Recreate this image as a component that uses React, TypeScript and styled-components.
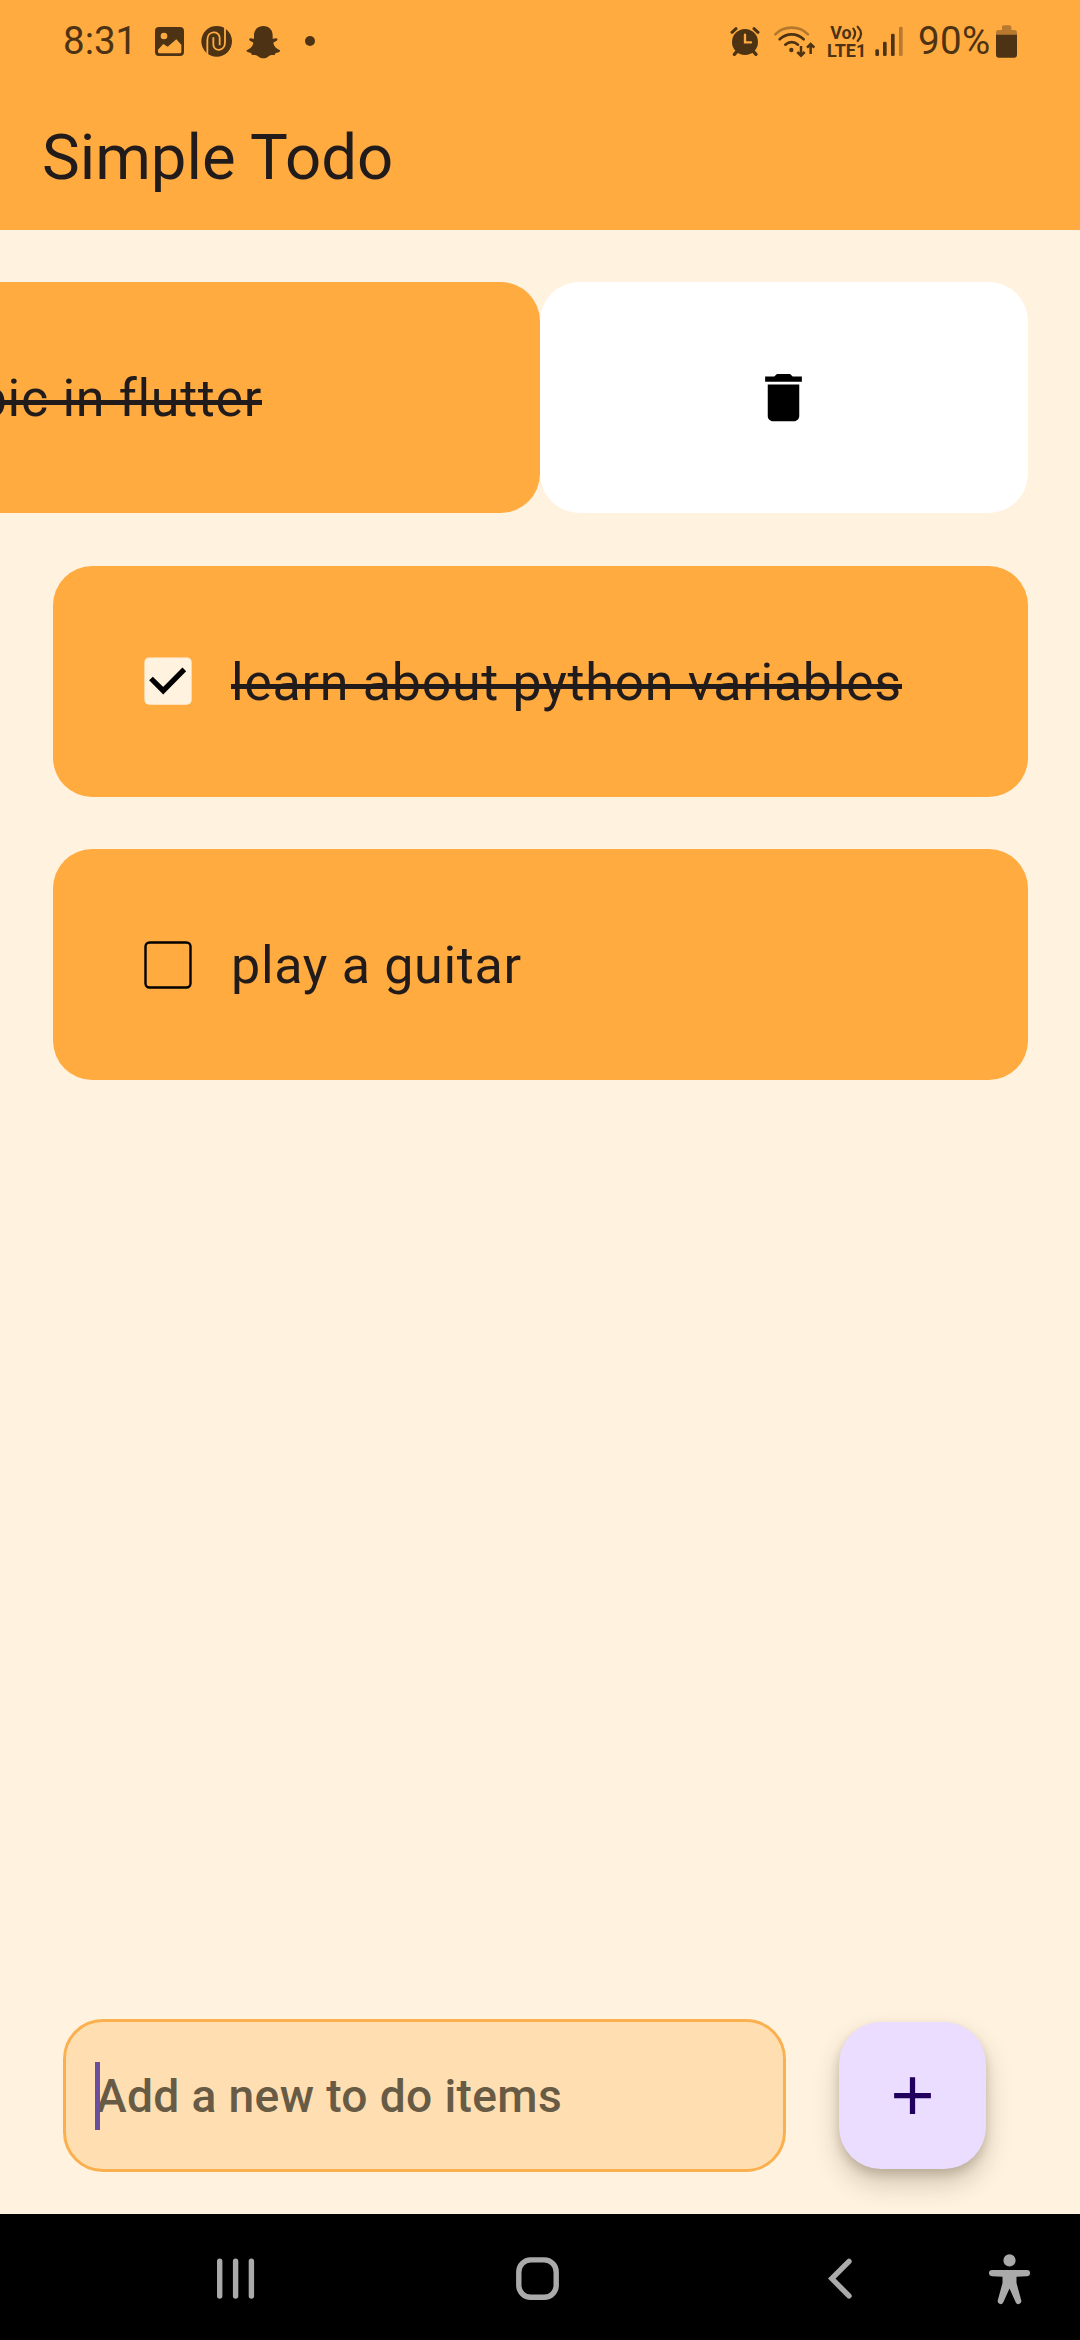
import React from "react";
import styled, { createGlobalStyle } from "styled-components";

const ink = "#4d3314";
const amber = "#ffab40";
const cream = "#fff2df";

const GlobalStyle = createGlobalStyle`
  * { box-sizing: border-box; }
  body { margin: 0; background: ${cream}; }
  button { border: 0; padding: 0; margin: 0; background: none; font: inherit; color: inherit; }
  svg { display: block; flex: none; }
`;

const Screen = styled.div`
  width: 1080px;
  height: 2340px;
  display: flex;
  flex-direction: column;
  overflow: hidden;
  background: ${cream};
  font-family: Roboto, "Noto Sans", sans-serif;
  color: #211c1b;
`;

const Header = styled.header`
  height: 230px;
  flex: none;
  background: ${amber};
`;

const StatusBar = styled.div`
  height: 83px;
  padding: 20px 62.7px 0 63px;
  display: flex;
  align-items: flex-start;
  justify-content: space-between;
  color: ${ink};
`;

const StatusGroup = styled.div`
  display: flex;
  align-items: center;
  height: 40px;
`;

const StatusText = styled.span<{ $width: number; $spacing: number }>`
  width: ${(p) => p.$width}px;
  padding-top: 2px;
  font-size: 38.5px;
  line-height: 40px;
  letter-spacing: ${(p) => p.$spacing}px;
  white-space: nowrap;
`;

const Gap = styled.span<{ $width: number }>`
  flex: none;
  width: ${(p) => p.$width}px;
`;

const Title = styled.h1`
  margin: 0;
  padding: 1px 0 0 42px;
  font-size: 63.5px;
  font-weight: 400;
  line-height: 147px;
`;

const List = styled.main`
  flex: 1;
  display: flex;
  flex-direction: column;
  gap: 52.5px;
  padding: 52.4px 52.5px 0;
  overflow: hidden;
`;

const SlideRow = styled.div<{ $offset: number }>`
  display: flex;
  flex: none;
  width: 1462.5px;
  margin-left: ${(p) => -p.$offset}px;
`;

const Card = styled.article`
  display: flex;
  align-items: center;
  flex: none;
  width: 975px;
  height: 231px;
  padding: 0 52.5px;
  border-radius: 39.4px;
  background: ${amber};
`;

const DeleteAction = styled.button`
  display: flex;
  align-items: center;
  justify-content: center;
  width: 487.5px;
  height: 231px;
  border-radius: 39.4px;
  background: #fff;
`;

const CheckArea = styled.span`
  display: flex;
  align-items: center;
  justify-content: center;
  width: 126px;
  height: 126px;
`;

/* The strike sits a little under the font's own line-through position. */
const Label = styled.span<{ $done: boolean; $shift: number }>`
  position: relative;
  margin: 2px 0 0 ${(p) => -p.$shift}px;
  font-size: 52px;
  line-height: 61px;
  letter-spacing: 0.68px;
  white-space: nowrap;

  &::after {
    content: "";
    display: ${(p) => (p.$done ? "block" : "none")};
    position: absolute;
    left: 0;
    right: 0;
    top: 32px;
    height: 5px;
    background: #211c1b;
  }
`;

const Composer = styled.footer`
  flex: none;
  display: flex;
  align-items: flex-start;
  gap: 53px;
  height: 195px;
  padding-left: 63px;
`;

const Field = styled.div`
  display: flex;
  align-items: center;
  width: 723px;
  height: 153px;
  padding-left: 28px;
  border: 3px solid #fbb04f;
  border-radius: 40px;
  background: #ffdfb1;
`;

const Caret = styled.span`
  flex: none;
  width: 5px;
  height: 68px;
  margin: 0 -5px 0 1px;
  background: #6a4f9e;
  z-index: 1;
`;

const Hint = styled.span`
  font-size: 46.2px;
  font-weight: 500;
  line-height: 56px;
  letter-spacing: 0.34px;
  margin-left: 1px;
  color: #685b45;
  white-space: nowrap;
`;

const AddButton = styled.button`
  display: flex;
  align-items: center;
  justify-content: center;
  width: 147px;
  height: 147px;
  margin-top: 3px;
  border-radius: 42px;
  background: #eaddff;
  box-shadow: 0 14px 26px rgba(60, 50, 30, 0.24), 0 5px 10px rgba(60, 50, 30, 0.18);
`;

const NavBar = styled.nav`
  flex: none;
  display: flex;
  align-items: flex-start;
  height: 126px;
  padding: 40px 0 0 217px;
  background: #000;
`;

/* Every status glyph shares one 40px tall strip, drawn on a 3x grid. */
const Glyph = ({ x, w, children }: { x: number; w: number; children: React.ReactNode }) => (
  <svg width={w / 3} height={40} viewBox={`${x} 60 ${w} 120`} fill={ink}>
    {children}
  </svg>
);

const ImageIcon = () => (
  <Glyph x={345} w={87}>
    <path
      fillRule="evenodd"
      d="M357 81h63a12 12 0 0 1 12 12v63a12 12 0 0 1-12 12h-63a12 12 0 0 1-12-12V93a12 12 0 0 1 12-12zM372 98a10 10 0 1 0 0 20a10 10 0 1 0 0-20zM354 149v6q0 5 5 5h60q5 0 5-5v-21l-15-16l-26 22l-13-8z"
    />
  </Glyph>
);

const SpiralIcon = () => (
  <Glyph x={483} w={93}>
    <circle cx={530} cy={124} r={46} />
    <g fill="none" stroke={amber} strokeWidth={5.5}>
      <path d="M502 168V120C502 90 539 92 539 113V136" />
      <path d="M555 80V126C555 157 520 155 520 134V112" />
    </g>
  </Glyph>
);

const GhostIcon = () => (
  <Glyph x={618} w={103}>
    <path d="M670 78c17 0 28 12 28 28v10c4 1 8-2 11-1c5 1 4 6 0 8c-4 2-9 3-9 7c2 10 10 17 20 21c2 3-3 6-13 8c-2 2-1 6-4 6c-6 0-11-1-16 3c-5 4-10 7-17 7s-12-3-17-7c-5-4-10-3-16-3c-3 0-2-4-4-6c-10-2-15-5-13-8c10-4 18-11 20-21c0-4-5-5-9-7c-4-2-5-7 0-8c3-1 7 2 11 1v-10c0-16 11-28 28-28z" />
  </Glyph>
);

const DotIcon = () => (
  <Glyph x={795} w={30}>
    <circle cx={810} cy={123} r={15} />
  </Glyph>
);

const AlarmIcon = () => (
  <Glyph x={58} w={90}>
    <circle cx={103} cy={126} r={39} />
    <g stroke={ink} strokeLinecap="round" fill="none">
      <path d="M64 97L76 86M142 97L130 86" strokeWidth={9} />
      <path d="M79 154L71 163M128 154L136 163" strokeWidth={10} />
    </g>
    <path d="M103 104V127H121" stroke={amber} strokeWidth={7} fill="none" strokeLinecap="round" />
  </Glyph>
);

const WifiIcon = () => (
  <Glyph x={190} w={124}>
    <g fill="none" stroke={ink} strokeLinecap="round">
      <path d="M194 103C220 76 266 76 292 103" strokeWidth={8} opacity={0.42} />
      <path d="M207 118C228 98 258 98 279 118" strokeWidth={8} />
      <path d="M224 134C235 124 251 124 262 134" strokeWidth={8} />
      <path
        d="M271 138V166M260 156L271 167L282 156M300 162V133M289 143L300 132L311 143"
        strokeWidth={7.5}
        strokeLinecap="butt"
      />
    </g>
    <circle cx={242} cy={150} r={6.5} />
  </Glyph>
);

const VolteIcon = () => (
  <Glyph x={350} w={118}>
    <g fontFamily="Roboto, sans-serif" fontWeight={700} fontSize={53}>
      <text x={360} y={118} textLength={64} lengthAdjust="spacingAndGlyphs">Vo</text>
      <text x={350} y={171} textLength={118} lengthAdjust="spacingAndGlyphs">LTE1</text>
    </g>
    <g fill="none" stroke={ink} strokeWidth={6.5} strokeLinecap="round">
      <path d="M429 86Q440 100 429 115" />
      <path d="M442 80Q462 100 442 123" />
    </g>
  </Glyph>
);

const SignalIcon = () => (
  <Glyph x={495} w={83}>
    <rect x={496} y={148} width={11} height={20} rx={4} />
    <rect x={519} y={125} width={11} height={43} rx={4} />
    <rect x={543} y={101} width={11} height={67} rx={4} />
    <rect x={567} y={80} width={11} height={88} rx={4} opacity={0.4} />
  </Glyph>
);

const BatteryIcon = () => (
  <Glyph x={858} w={63}>
    <path d="M858 105V97q0-7 7-7h11v-9q0-5 5-5h18q5 0 5 5v9h10q7 0 7 7v8z" opacity={0.4} />
    <path d="M858 104h63v60q0 9-9 9h-45q-9 0-9-9z" />
  </Glyph>
);

const Checkbox = ({ checked }: { checked: boolean }) => (
  <svg width={48} height={48} viewBox="0 0 48 48" fill="none">
    {checked ? (
      <>
        <rect x={0.4} y={0.4} width={47.25} height={47.25} rx={5} fill={cream} />
        <path d="M7 21.5L19.2 33.7L40.3 12.4" stroke="#000" strokeWidth={5.25} />
      </>
    ) : (
      <rect x={1.5} y={1.5} width={45} height={45} rx={4} stroke="#000" strokeWidth={2.4} />
    )}
  </svg>
);

const TrashIcon = () => (
  <svg width={63} height={63} viewBox="0 0 24 24">
    <path d="M6 19c0 1.1.9 2 2 2h8c1.1 0 2-.9 2-2V7H6v12zM19 4h-3.5l-1-1h-5l-1 1H5v2h14V4z" />
  </svg>
);

const PlusIcon = () => (
  <svg width={63} height={63} viewBox="0 0 24 24" fill="#21005d">
    <path d="M19 13h-6v6h-2v-6H5v-2h6V5h2v6h6v2z" />
  </svg>
);

const RecentsIcon = () => (
  <svg width={38} height={50} viewBox="0 0 38 50" stroke="#aaa" strokeWidth={5.4} strokeLinecap="round">
    <path d="M2.7 7.2V42M18.6 7.2V42M34.4 7.2V42" />
  </svg>
);

const HomeIcon = () => (
  <svg width={43} height={50} viewBox="0 0 43 50" fill="none" stroke="#aaa" strokeWidth={5.4}>
    <rect x={2.8} y={5.9} width={37.4} height={37.4} rx={12} />
  </svg>
);

const BackIcon = () => (
  <svg width={24} height={50} viewBox="0 0 24 50" fill="none" stroke="#aaa" strokeWidth={5.4} strokeLinecap="round">
    <path d="M21 7.3L3.8 24.6L21 41.9" />
  </svg>
);

const PersonIcon = () => (
  <svg width={42} height={52} viewBox="0 0 42 52" fill="#aaa">
    <circle cx={20.5} cy={6.4} r={6.1} />
    <path d="M3 16h35a3 3 0 0 1 0 6.2L27.5 22.8V29L32.3 46.5a3 3 0 0 1-5.4 2.3L20.5 34.5L14.1 48.8a3 3 0 0 1-5.4-2.3L13.5 29V22.8L3 22.2a3 3 0 0 1 0-6.2z" />
  </svg>
);

const Todo = ({ text, done, shift = 0 }: { text: string; done: boolean; shift?: number }) => (
  <Card>
    <CheckArea>
      <Checkbox checked={done} />
    </CheckArea>
    <Label $done={done} $shift={shift}>{text}</Label>
  </Card>
);

export default function App() {
  return (
    <Screen>
      <GlobalStyle />
      <Header>
        <StatusBar>
          <StatusGroup>
            <StatusText $width={92} $spacing={0}>8:31</StatusText>
            <ImageIcon />
            <Gap $width={17} />
            <SpiralIcon />
            <Gap $width={14} />
            <GhostIcon />
            <Gap $width={24.7} />
            <DotIcon />
          </StatusGroup>
          <StatusGroup>
            <AlarmIcon />
            <Gap $width={14} />
            <WifiIcon />
            <Gap $width={12} />
            <VolteIcon />
            <Gap $width={9} />
            <SignalIcon />
            <Gap $width={15} />
            <StatusText $width={78.3} $spacing={0.4}>90%</StatusText>
            <BatteryIcon />
          </StatusGroup>
        </StatusBar>
        <Title>Simple Todo</Title>
      </Header>
      <List>
        <SlideRow $offset={487.5}>
          <Todo text="Learn a topic in flutter" done shift={3} />
          <DeleteAction aria-label="Delete">
            <TrashIcon />
          </DeleteAction>
        </SlideRow>
        <Todo text="learn about python variables" done />
        <Todo text="play a guitar" done={false} />
      </List>
      <Composer>
        <Field>
          <Caret />
          <Hint>Add a new to do items</Hint>
        </Field>
        <AddButton aria-label="Add">
          <PlusIcon />
        </AddButton>
      </Composer>
      <NavBar>
        <RecentsIcon />
        <Gap $width={261} />
        <HomeIcon />
        <Gap $width={269} />
        <BackIcon />
        <Gap $width={137} />
        <PersonIcon />
      </NavBar>
    </Screen>
  );
}
